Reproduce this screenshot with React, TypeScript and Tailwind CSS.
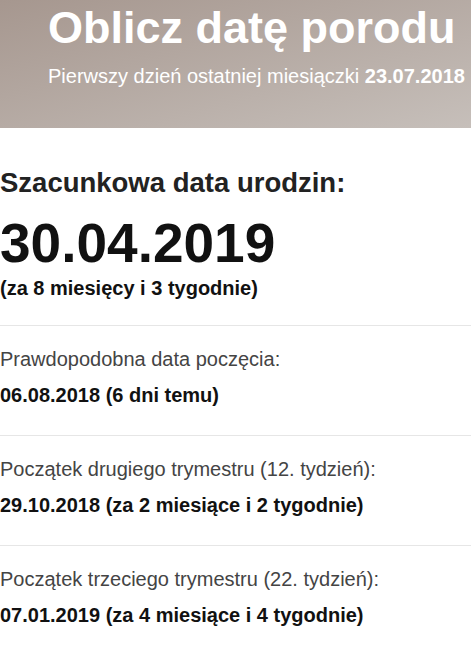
import React from "react";

const details = [
  {
    label: "Prawdopodobna data poczęcia:",
    value: "06.08.2018 (6 dni temu)",
  },
  {
    label: "Początek drugiego trymestru (12. tydzień):",
    value: "29.10.2018 (za 2 miesiące i 2 tygodnie)",
  },
  {
    label: "Początek trzeciego trymestru (22. tydzień):",
    value: "07.01.2019 (za 4 miesiące i 4 tygodnie)",
  },
];

export default function App() {
  return (
    <div className="w-[471px] h-[646px] overflow-hidden bg-white font-['Liberation_Sans',Arial,sans-serif]">
      {/* Hero header */}
      <header className="h-[128px] bg-linear-to-br from-[#a6978f] to-[#c6bfba] pl-12 pt-[3px] text-white">
        <h1 className="text-[45px] leading-[50px] font-bold whitespace-nowrap">Oblicz datę porodu</h1>
        <p className="mt-[11px] text-[20px] leading-[24px] whitespace-nowrap">
          Pierwszy dzień ostatniej miesiączki <span className="font-bold">23.07.2018</span>
        </p>
      </header>

      {/* Estimated date */}
      <section className="pt-[38px] pb-[25px]">
        <h2 className="text-[27.5px] leading-[33px] font-bold text-[#222]">Szacunkowa data urodzin:</h2>
        <p className="mt-[14px] text-[55px] leading-[60px] font-bold text-[#111]">30.04.2019</p>
        <p className="mt-[3px] text-[20px] leading-[24px] font-bold text-[#111]">(za 8 miesięcy i 3 tygodnie)</p>
      </section>

      {/* Detail rows */}
      {details.map((d) => (
        <div key={d.label} className="border-t border-[#e6e6e6] pt-[19px] pb-[25px]">
          <p className="text-[20px] leading-[28px] text-[#444] whitespace-nowrap">{d.label}</p>
          <p className="mt-[7px] text-[20px] leading-[30px] font-bold text-[#111] whitespace-nowrap">{d.value}</p>
        </div>
      ))}
    </div>
  );
}
